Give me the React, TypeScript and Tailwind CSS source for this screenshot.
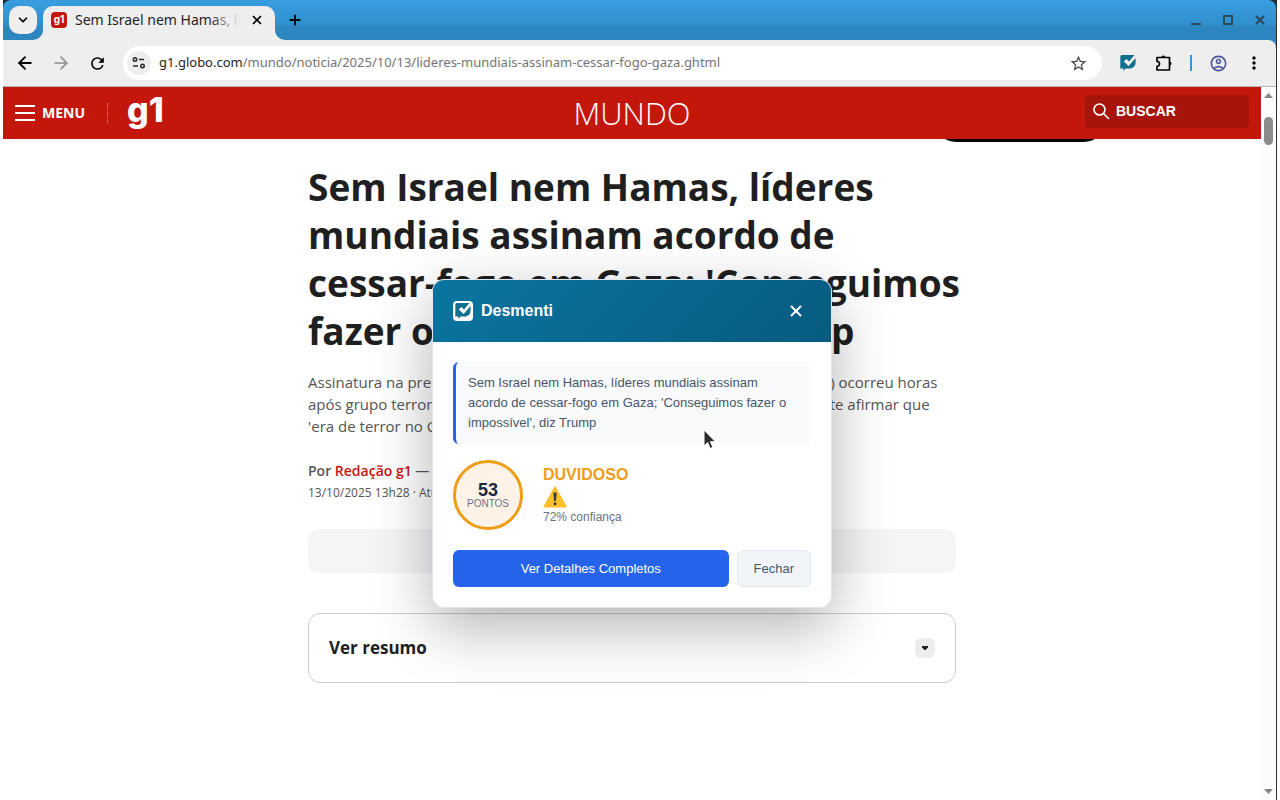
import {
  ArrowLeft,
  ArrowRight,
  ChevronDown,
  Plus,
  X,
} from "lucide-react";
import {
  MdOutlineAccountCircle,
  MdMoreVert,
  MdRefresh,
  MdStarOutline,
} from "react-icons/md";

function TabStrip() {
  return (
    <div className="flex h-10 items-end rounded-t-lg bg-linear-to-b from-[#389edf] from-0% via-[#3190ce] via-60% to-[#2d86c0] to-70% pl-1.5">
      <button
        aria-label="Pesquisar guias"
        className="mb-1.5 flex size-7 items-center justify-center rounded-[10px] bg-[#eeeeee] text-black"
      >
        <ChevronDown size={14} strokeWidth={3} />
      </button>
      <div className="relative ml-1.5 flex h-[34px] w-[232px] items-center rounded-t-[10px] bg-[#eeeeee] pr-2 pb-1.5 pl-2">
        <svg width="10" height="10" viewBox="0 0 10 10" fill="#eeeeee" className="absolute bottom-0 -left-2.5">
          <path d="M10 0v10H0A10 10 0 0 0 10 0z" />
        </svg>
        <svg width="10" height="10" viewBox="0 0 10 10" fill="#eeeeee" className="absolute -right-2.5 bottom-0">
          <path d="M0 0v10h10A10 10 0 0 1 0 0z" />
        </svg>
        <span className="flex size-4 shrink-0 items-center justify-center rounded bg-[#c4170c] pb-0.5 font-[Inter,sans-serif] text-[10px] leading-none font-bold text-white">
          g1
        </span>
        <span className="relative ml-2 w-[168px] overflow-hidden font-['Noto_Sans',sans-serif] text-sm whitespace-nowrap text-[#1f1f1f]">
          Sem Israel nem Hamas, líderes
          <span className="absolute inset-y-0 right-0 w-8 bg-linear-to-r from-[#eeeeee]/0 to-[#eeeeee]" />
        </span>
        <button aria-label="Fechar guia" className="ml-1.5 flex size-5 shrink-0 items-center justify-center text-black">
          <X size={14} strokeWidth={3} />
        </button>
      </div>
      <button aria-label="Nova guia" className="mb-2.5 ml-2.5 flex size-5 items-center justify-center text-black">
        <Plus size={16} strokeWidth={2.8} />
      </button>
      <div className="mr-1.5 mb-2.5 ml-auto flex gap-3 text-[#2a4a60]">
        <button aria-label="Minimizar" className="flex size-5 items-center justify-center">
          <svg width="12" height="12" viewBox="0 0 12 12" fill="currentColor">
            <path d="M1 9h10v2H1z" />
          </svg>
        </button>
        <button aria-label="Maximizar" className="flex size-5 items-center justify-center">
          <svg width="12" height="12" viewBox="0 0 12 12" fill="none" stroke="currentColor" strokeWidth="2">
            <path d="M2 2h8v8H2z" />
          </svg>
        </button>
        <button aria-label="Fechar janela" className="flex size-5 items-center justify-center">
          <svg width="12" height="12" viewBox="0 0 12 12" fill="none" stroke="currentColor" strokeWidth="2.200">
            <path d="M2 2l8 8M10 2l-8 8" />
          </svg>
        </button>
      </div>
    </div>
  );
}

function CheckBubble({ size }: { size: number }) {
  return (
    <svg width={size} height={size} viewBox="0 0 16 16">
      <path d="M2 0h12.500l-5.500 6.500L6.500 4 3.800 6.500 8.600 11 15.600 3v4.500c0 3.500-2.600 6-6 6H5.500L3.500 16v-2.500H.3V1.500Q.3 0 2 0z" fill="#12708f" />
    </svg>
  );
}

function Toolbar() {
  return (
    <div className="relative flex h-[47px] items-center rounded-tr-lg border-b border-[#b5b5b5] bg-[#eeeeee] px-3 text-black">
      <button aria-label="Voltar" className="flex size-5 items-center justify-center">
        <ArrowLeft size={20} strokeWidth={2.2} />
      </button>
      <button aria-label="Avançar" className="ml-4 flex size-5 items-center justify-center text-[#8f8f8f]">
        <ArrowRight size={20} strokeWidth={2} />
      </button>
      <button aria-label="Recarregar" className="ml-4 flex size-5 items-center justify-center">
        <MdRefresh size={19} />
      </button>
      <div className="ml-4 flex h-[34px] min-w-0 flex-1 items-center rounded-full bg-white pr-3.5">
        <button
          aria-label="Informações do site"
          className="ml-1 flex size-6 shrink-0 items-center justify-center rounded-full bg-[#eeeeee] text-[#2b2b2b]"
        >
          <svg width="14" height="12" viewBox="0 0 14 12" fill="none" stroke="currentColor" strokeWidth="1.600">
            <circle cx="3" cy="2.500" r="1.700" />
            <path d="M7 2.500h5M1 9h5" />
            <circle cx="10.500" cy="9" r="1.700" />
          </svg>
        </button>
        <button className="min-w-0 flex-1 truncate pl-2 text-left font-['Noto_Sans',sans-serif] text-[13px] text-[#1f1f1f]">
          g1.globo.com
          <span className="text-[#747474]">/mundo/noticia/2025/10/13/lideres-mundiais-assinam-cessar-fogo-gaza.ghtml</span>
        </button>
        <button aria-label="Adicionar aos favoritos" className="text-[#4a4a4a]">
          <MdStarOutline size={19} />
        </button>
      </div>
      <div className="ml-4 flex shrink-0 items-center">
        <button aria-label="Desmenti" className="flex size-5 items-center justify-center">
          <CheckBubble size={16} />
        </button>
        <button aria-label="Extensões" className="ml-4 flex size-5 items-center justify-center">
          <svg width="18" height="18" viewBox="0 0 18 18" fill="none" stroke="currentColor" strokeWidth="1.700">
            <path d="M2 3.500h12.500V16H2v-3.700a2.500 2.500 0 0 0 0-5z" strokeLinejoin="round" />
            <path d="M6.300 3.500a2 2 0 0 1 4 0zM14.500 7.500a2 2 0 0 1 0 4z" fill="currentColor" stroke="none" />
          </svg>
        </button>
        <span className="ml-4 h-4 w-0.5 bg-[#3a93d0]" />
        <button aria-label="Perfil" className="ml-4 flex size-5 items-center justify-center text-[#4b559b]">
          <MdOutlineAccountCircle size={19} />
        </button>
        <button aria-label="Mais opções" className="ml-4 flex size-5 items-center justify-center">
          <MdMoreVert size={20} />
        </button>
      </div>
    </div>
  );
}

function SiteHeader() {
  return (
    <header className="relative z-10 grid h-[52px] grid-cols-3 items-center bg-[#c4170c] px-3 text-white">
      <div className="flex items-center">
        <button className="flex items-center gap-[7px] font-['Open_Sans',sans-serif] text-sm font-bold">
          <span className="flex w-5 flex-col gap-[5px]">
            <span className="h-0.5 bg-white" />
            <span className="h-0.5 bg-white" />
            <span className="h-0.5 bg-white" />
          </span>
          MENU
        </button>
        <span className="ml-[22px] h-5 border-l border-dotted border-white/50" />
        <a href="#g1" className="ml-[19px] pb-1.5 font-[Inter,sans-serif] text-[34px] leading-none font-extrabold">
          g1
        </a>
      </div>
      <a href="#mundo" className="text-center font-['Open_Sans',sans-serif] text-[31px] leading-none font-light">
        MUNDO
      </a>
      <label className="mb-1 flex h-[33px] w-41 items-center gap-1.5 justify-self-end rounded bg-[#a6140b] pl-2">
        <svg width="17" height="17" viewBox="0 0 17 17" fill="none" stroke="currentColor" strokeWidth="1.600" className="shrink-0">
          <circle cx="6.500" cy="6.500" r="5.500" />
          <path d="M10.500 10.500l5.500 5.500" />
        </svg>
        <input
          type="search"
          aria-label="Buscar"
          placeholder="BUSCAR"
          className="w-full min-w-0 bg-transparent font-['Liberation_Sans',sans-serif] text-sm font-bold text-white outline-none placeholder:text-white"
        />
      </label>
    </header>
  );
}

function Article() {
  return (
    <article className="mx-auto w-full max-w-[648px] pt-6 font-['Open_Sans',sans-serif]">
      <h1 className="text-[37px] leading-[48px] font-bold whitespace-nowrap text-[#1f1f1f]">
        Sem Israel nem Hamas, líderes
        <br />
        mundiais assinam acordo de
        <br />
        cessar-fogo em Gaza; 'Conseguimos
        <br />
        fazer o impossível', diz Trump
      </h1>
      <p className="mt-4 text-[15px] leading-[22px] whitespace-nowrap text-[#555555]">
        Assinatura na presença de Donald Trump no Egito, nesta segunda-feira (13) ocorreu horas
        <br />
        após grupo terrorista libertar os últimos reféns vivos e antes de o presidente afirmar que
        <br />
        'era de terror no Oriente Médio acabou'.
      </p>
      <div className="mt-[22px] text-[#555555]">
        <p className="text-sm leading-6">
          <strong className="font-semibold">Por</strong>{" "}
          <a href="#redacao" className="font-semibold text-[#c4170c]">
            Redação g1
          </a>{" "}
          — São Paulo
        </p>
        <p className="text-xs leading-5">13/10/2025 13h28 · Atualizado há uma hora</p>
      </div>
      <div className="mt-[26px] h-11 rounded-xl bg-[#f3f5f7]" />
      <section className="mt-10 flex h-[70px] items-center justify-between rounded-xl border border-[#cccccc] px-5">
        <h2 className="text-[17px] font-bold text-[#1f1f1f]">Ver resumo</h2>
        <button aria-label="Expandir resumo" className="flex size-5 items-center justify-center rounded-md bg-[#ebeced]">
          <svg width="6" height="4" viewBox="0 0 6 4" fill="#222">
            <path d="M0 0h6v1.300L3.700 4H2.300L0 1.300z" />
          </svg>
        </button>
      </section>
    </article>
  );
}

function DesmentiDialog() {
  return (
    <div
      role="dialog"
      aria-label="Desmenti"
      className="relative w-[400px] overflow-hidden rounded-xl border border-[#e2e8f0] bg-white font-['Liberation_Sans',sans-serif] shadow-[0_20px_60px_rgba(0,0,0,0.3)]"
    >
      <div className="flex h-[62px] items-center bg-linear-135 from-[#0a75a1] to-[#085b80] px-5 text-white">
        <span className="flex size-5 items-center justify-center rounded bg-white">
          <CheckBubble size={16} />
        </span>
        <h2 className="ml-2 text-base font-bold">Desmenti</h2>
        <button aria-label="Fechar aviso" className="ml-auto flex size-[30px] items-center justify-center">
          <X size={18} strokeWidth={2.6} />
        </button>
      </div>
      <div className="flex flex-col p-5">
        <blockquote className="rounded-md border-l-3 border-[#2563eb] bg-[#f8fafc] px-3 py-[11px] text-[13px] leading-5 text-[#475569]">
          Sem Israel nem Hamas, líderes mundiais assinam acordo de cessar-fogo em Gaza; 'Conseguimos fazer o
          impossível', diz Trump
        </blockquote>
        <div className="mt-4 flex items-center gap-5">
          <div className="flex size-[70px] flex-col items-center justify-center rounded-full border-3 border-[#ee9d16] bg-[#fef3e6]">
            <span className="text-lg leading-[18px] font-bold text-[#1e293b]">53</span>
            <span className="text-[10px] leading-[10px] text-[#6b7280]">PONTOS</span>
          </div>
          <div className="flex flex-col">
            <strong className="text-base leading-5 font-bold text-[#ee9d16]">DUVIDOSO</strong>
            <svg width="24" height="24" viewBox="0 0 24 24">
              <path d="M12 2.500L22.500 21.500H1.500z" fill="#fcc02c" stroke="#fcc02c" strokeWidth="2" strokeLinejoin="round" />
              <path d="M10.400 7.500h3.200l-.6 8.500h-2z" fill="#333b42" />
              <circle cx="12" cy="18.800" r="1.500" fill="#333b42" />
            </svg>
            <span className="text-xs leading-4 text-[#6b7280]">72% confiança</span>
          </div>
        </div>
        <div className="mt-5 flex gap-2 text-[13px]">
          <button className="h-[37px] flex-1 rounded-md bg-[#2563eb] text-white">Ver Detalhes Completos</button>
          <button className="h-[37px] rounded-md border border-[#e2e8f0] bg-[#f1f5f9] px-4 text-[#475569]">
            Fechar
          </button>
        </div>
      </div>
    </div>
  );
}

function Scrollbar() {
  return (
    <div className="flex w-[15px] shrink-0 flex-col items-center bg-[#fcfcfc] py-1.5">
      <svg width="9" height="5" viewBox="0 0 9 5" fill="#868686">
        <path d="M4.500 0L9 5H0z" />
      </svg>
      <span className="mt-[19px] h-7 w-[9px] rounded-full bg-[#8b8b8b]" />
      <svg width="9" height="5" viewBox="0 0 9 5" fill="#868686" className="mt-auto">
        <path d="M4.500 5L0 0h9z" />
      </svg>
    </div>
  );
}

export default function App() {
  return (
    <div className="min-h-screen bg-white pr-[3px] pl-[3px]">
      <div className="flex min-h-screen flex-col border-r border-[#2b2f33] bg-white">
        <div className="bg-[#1d2b36]">
          <TabStrip />
        </div>
        <div className="bg-[#2d86c0]">
          <Toolbar />
        </div>
        <div className="flex flex-1">
          <main className="relative min-w-0 flex-1">
            <SiteHeader />
            <div className="absolute top-2 right-[154px] h-[47px] w-[174px] rounded-[24px] bg-black" />
            <Article />
            <div className="absolute inset-0 flex items-center justify-center">
              <DesmentiDialog />
              <svg
                width="14"
                height="21"
                viewBox="0 0 14 21"
                className="absolute top-[342px] left-[700px]"
                fill="#2b2b2b"
                stroke="#fff"
              >
                <path d="M1 1v16l3.700-3.400L7.300 19.500l2.600-1.200-2.500-5.600h5z" />
              </svg>
            </div>
          </main>
          <Scrollbar />
        </div>
      </div>
    </div>
  );
}
